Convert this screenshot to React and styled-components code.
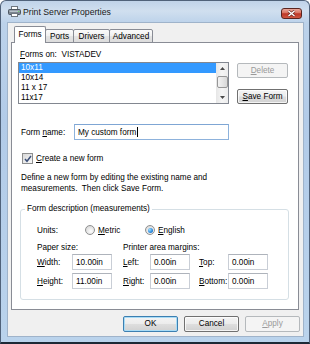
import React from "react";
import styled, { createGlobalStyle } from "styled-components";

const GlobalStyle = createGlobalStyle`
  html, body {
    margin: 0;
    padding: 0;
    background: #fff;
  }
  body {
    width: 310px;
    height: 344px;
    overflow: hidden;
    font-family: "Liberation Sans", Arial, sans-serif;
    font-size: 8.2px;
    color: #000;
  }
  * {
    box-sizing: border-box;
  }
`;

const forms = ["10x11", "10x14", "11 x 17", "11x17"];

const Window = styled.div`
  width: 310px;
  height: 344px;
  display: flex;
  flex-direction: column;
  border: 1px solid #50627a;
  border-bottom: 2px solid #1d2936;
  border-radius: 6px 6px 0 0;
  background: linear-gradient(
    180deg,
    #c0d3e9 0px,
    #d0dfef 10px,
    #bcd2ea 22px,
    #b2cbe8 120px,
    #bad3ec 100%
  );
  padding: 0 5px 5px 6px;
`;

const TitleBar = styled.div`
  height: 21px;
  display: flex;
  align-items: center;
  padding-left: 1px;
`;

const TitleText = styled.span`
  margin-left: 2px;
  font-size: 8.7px;
  color: #1a1a1a;
  flex: 1;
`;

const CloseButton = styled.span`
  width: 21px;
  height: 11px;
  margin: 3px 2px 0 0;
  display: flex;
  align-items: center;
  justify-content: center;
  border: 1px solid #5a2520;
  border-radius: 3px;
  background: linear-gradient(
    180deg,
    #eaa89c 0%,
    #d9725f 45%,
    #bd3626 52%,
    #cf5741 100%
  );
`;

const Client = styled.div`
  flex: 1;
  display: flex;
  flex-direction: column;
  background: #f0f0f0;
  border: 1px solid #9fb3ca;
  padding: 3px 4px 0 3px;
`;

const TabStrip = styled.div`
  height: 17px;
  display: flex;
  align-items: flex-end;
  padding-left: 3px;
  margin-bottom: -1px;
  position: relative;
  z-index: 1;
`;

const Tab = styled.div`
  width: ${(p) => p.$w}px;
  height: ${(p) => (p.$active ? 17 : 14)}px;
  margin-left: ${(p) => (p.$first ? 0 : -1)}px;
  display: flex;
  align-items: center;
  justify-content: center;
  border: 1px solid #898c95;
  border-bottom: ${(p) => (p.$active ? "none" : "1px solid #898c95")};
  border-radius: 2px 2px 0 0;
  background: ${(p) =>
    p.$active
      ? "#fff"
      : "linear-gradient(180deg, #fbfbfb 0%, #f0f0f0 50%, #e4e4e4 51%, #dcdcdc 100%)"};
  position: relative;
  z-index: ${(p) => (p.$active ? 2 : 1)};
  padding-bottom: ${(p) => (p.$active ? 2 : 0)}px;
`;

const Panel = styled.div`
  height: 268px;
  display: flex;
  flex-direction: column;
  border: 1px solid #898c95;
  background: #fff;
`;

const Label = styled.span`
  white-space: nowrap;
  line-height: 10px;
`;

const U = styled.span`
  text-decoration: underline;
`;

const FormsOn = styled.div`
  margin: 7px 0 0 8px;
  line-height: 10px;
  height: 10px;
`;

const ListRow = styled.div`
  display: flex;
  align-items: flex-start;
  margin: 2px 0 0 6px;
`;

const ListBox = styled.div`
  width: 211px;
  height: 42px;
  display: flex;
  border: 1px solid #828790;
  background: #fff;
`;

const ListItems = styled.div`
  flex: 1;
  display: flex;
  flex-direction: column;
`;

const ListItem = styled.div`
  height: 10px;
  line-height: 10px;
  padding-left: 2px;
  background: ${(p) => (p.$selected ? "#3399ff" : "transparent")};
  color: ${(p) => (p.$selected ? "#fff" : "#000")};
`;

const ScrollBar = styled.div`
  width: 12px;
  display: flex;
  flex-direction: column;
  align-items: center;
  background: linear-gradient(90deg, #e6e6e6, #f5f5f5 50%, #ececec);
`;

const ScrollArrow = styled.div`
  height: 11px;
  width: 100%;
  display: flex;
  align-items: center;
  justify-content: center;
`;

const ScrollThumb = styled.div`
  width: 11px;
  height: 12px;
  margin: 2px 0 1px;
  border: 1px solid #979797;
  border-radius: 2px;
  background: linear-gradient(90deg, #f3f3f3, #e6e6e6 50%, #d8d8d8);
`;

const Spacer = styled.div`
  flex: 1;
`;

const SideButtons = styled.div`
  display: flex;
  flex-direction: column;
  gap: 11px;
  margin: 1px 0 0 8px;
`;

const Button = styled.button`
  width: ${(p) => p.$w || 55}px;
  height: ${(p) => p.$h || 16}px;
  padding: 0;
  font: inherit;
  line-height: 10px;
  color: ${(p) => (p.disabled ? "#9a9a9a" : "#000")};
  border: 1px solid
    ${(p) => (p.$primary ? "#3c7fb1" : p.disabled ? "#b5b9bc" : "#707070")};
  border-radius: 2px;
  background: ${(p) =>
    p.disabled
      ? "#f4f4f4"
      : "linear-gradient(180deg, #f4f4f4 0%, #ececec 48%, #dedede 52%, #d1d1d1 100%)"};
  box-shadow: ${(p) =>
    p.$primary
      ? "inset 0 0 0 1px #a9dcf6"
      : p.disabled
      ? "none"
      : "inset 0 0 0 1px rgba(255, 255, 255, 0.75)"};
`;

const Row = styled.div`
  display: flex;
  align-items: center;
  margin: ${(p) => p.$mt || 0}px 0 0 ${(p) => p.$ml || 0}px;
  height: ${(p) => p.$h}px;
`;

const FieldLabel = styled.span`
  width: ${(p) => p.$w}px;
  white-space: nowrap;
`;

const TextBox = styled.div`
  width: ${(p) => p.$w}px;
  height: ${(p) => p.$h || 16}px;
  display: flex;
  align-items: center;
  padding-left: 3px;
  background: #fff;
  border: 1px solid ${(p) => (p.$focused ? "#8db2dc" : "#c9ced6")};
  border-top-color: ${(p) => (p.$focused ? "#7fa6d4" : "#aeb3bb")};
  white-space: nowrap;
`;

const Caret = styled.span`
  display: inline-block;
  width: 1px;
  height: 10px;
  background: #000;
  margin-left: 1px;
`;

const CheckBox = styled.span`
  width: 11px;
  height: 11px;
  display: flex;
  align-items: center;
  justify-content: center;
  border: 1px solid #8e8f8f;
  background: linear-gradient(135deg, #d9d9d9, #f8f8f8);
  margin-right: 3px;
`;

const Description = styled.div`
  margin: 8px 0 0 9px;
  line-height: 11px;
`;

const GroupBox = styled.fieldset`
  width: 269px;
  margin: 10px 0 0 8px;
  padding: 0 0 10px 0;
  border: 1px solid #d5dfe5;
  border-radius: 3px;
  min-inline-size: 0;
`;

const Legend = styled.legend`
  margin-left: 4px;
  padding: 0 2px;
  line-height: 10px;
  height: 10px;
`;

const GroupBody = styled.div`
  padding-left: 16px;
`;

const Radio = styled.span`
  width: 10px;
  height: 10px;
  margin-right: 3px;
  border-radius: 50%;
  border: 1px solid #8f9090;
  background: radial-gradient(circle at 60% 65%, #fdfdfd 0%, #e2e2e2 60%, #cfcfcf 100%);
  display: flex;
  align-items: center;
  justify-content: center;
  &::after {
    content: "";
    display: ${(p) => (p.$checked ? "block" : "none")};
    width: 5px;
    height: 5px;
    border-radius: 50%;
    background: radial-gradient(circle at 35% 35%, #9fe0ff 0%, #2f8ee0 55%, #1b5fae 100%);
  }
`;

const RadioOption = styled.span`
  width: ${(p) => p.$w}px;
  display: flex;
  align-items: center;
`;

const MeasureGrid = styled.div`
  display: grid;
  grid-template-columns: 35px 51px 27px 49px 29px 40px;
  align-items: center;
  height: ${(p) => p.$h}px;
  margin-top: ${(p) => p.$mt}px;
`;

const Span2 = styled.span`
  grid-column: span ${(p) => p.$n};
  white-space: nowrap;
`;

const DialogButtons = styled.div`
  display: flex;
  justify-content: flex-end;
  gap: 6px;
  margin: 6px -1px 0 0;
`;

const PrinterIcon = () => (
  <svg width="13" height="11" viewBox="0 0 13 11">
    <rect x="3.5" y="0.5" width="6" height="3" fill="#fff" stroke="#6f7780" />
    <rect x="0.5" y="3.5" width="12" height="5" rx="1" fill="#7d8791" stroke="#4d5660" />
    <rect x="1.5" y="4.5" width="10" height="1.5" fill="#b8c1ca" />
    <rect x="3.5" y="7.5" width="6" height="3" fill="#fff" stroke="#6f7780" />
    <rect x="10" y="5" width="1.2" height="1" fill="#6fd36f" />
  </svg>
);

const CloseGlyph = () => (
  <svg width="9" height="7" viewBox="0 0 9 7">
    <path d="M1.5 1 L7.5 6 M7.5 1 L1.5 6" stroke="#6b2a22" strokeWidth="2.8" />
    <path d="M1.5 1 L7.5 6 M7.5 1 L1.5 6" stroke="#fff" strokeWidth="1.5" />
  </svg>
);

const Arrow = ({ up }) => (
  <svg width="5" height="3" viewBox="0 0 5 3">
    <path d={up ? "M0 3 L2.5 0 L5 3 Z" : "M0 0 L2.5 3 L5 0 Z"} fill="#4a4a4a" />
  </svg>
);

const CheckMark = () => (
  <svg width="8" height="8" viewBox="0 0 8 8">
    <path d="M1 4 L3 6.3 L7 1" fill="none" stroke="#3b4f78" strokeWidth="1.5" />
  </svg>
);

const App = () => {
  return (
    <>
      <GlobalStyle />
      <Window>
        <TitleBar>
          <PrinterIcon />
          <TitleText>Print Server Properties</TitleText>
          <CloseButton>
            <CloseGlyph />
          </CloseButton>
        </TitleBar>

        <Client>
          <TabStrip>
            <Tab $w={32} $active $first>Forms</Tab>
            <Tab $w={29}>Ports</Tab>
            <Tab $w={37}>Drivers</Tab>
            <Tab $w={44}>Advanced</Tab>
          </TabStrip>

          <Panel>
            <FormsOn>
              <U>F</U>orms on:&nbsp;&nbsp;VISTADEV
            </FormsOn>

            <ListRow>
              <ListBox>
                <ListItems>
                  {forms.map((f, i) => (
                    <ListItem key={f} $selected={i === 0}>
                      {f}
                    </ListItem>
                  ))}
                </ListItems>
                <ScrollBar>
                  <ScrollArrow>
                    <Arrow up />
                  </ScrollArrow>
                  <ScrollThumb />
                  <Spacer />
                  <ScrollArrow>
                    <Arrow />
                  </ScrollArrow>
                </ScrollBar>
              </ListBox>
              <SideButtons>
                <Button $w={51} $h={15} disabled>
                  <U>D</U>elete
                </Button>
                <Button $w={51} $h={15}>
                  <U>S</U>ave Form
                </Button>
              </SideButtons>
            </ListRow>

            <Row $mt={20} $ml={9} $h={16}>
              <FieldLabel $w={53}>
                Form <U>n</U>ame:
              </FieldLabel>
              <TextBox $w={155} $focused>
                My custom form
                <Caret />
              </TextBox>
            </Row>

            <Row $mt={13} $ml={10} $h={11}>
              <CheckBox>
                <CheckMark />
              </CheckBox>
              <Label>
                <U>C</U>reate a new form
              </Label>
            </Row>

            <Description>
              Define a new form by editing the existing name and
              <br />
              measurements.&nbsp; Then click Save Form.
            </Description>

            <GroupBox>
              <Legend>Form description (measurements)</Legend>
              <GroupBody>
                <Row $mt={9} $h={14}>
                  <FieldLabel $w={48}>Units:</FieldLabel>
                  <RadioOption $w={60}>
                    <Radio />
                    <U>M</U>etric
                  </RadioOption>
                  <RadioOption $w={60}>
                    <Radio $checked />
                    <U>E</U>nglish
                  </RadioOption>
                </Row>

                <MeasureGrid $h={12} $mt={4}>
                  <Span2 $n={2}>Paper size:</Span2>
                  <Span2 $n={4}>Printer area margins:</Span2>
                </MeasureGrid>

                <MeasureGrid $h={16} $mt={1}>
                  <span>
                    <U>W</U>idth:
                  </span>
                  <TextBox $w={40}>10.00in</TextBox>
                  <span>
                    <U>L</U>eft:
                  </span>
                  <TextBox $w={40}>0.00in</TextBox>
                  <span>
                    <U>T</U>op:
                  </span>
                  <TextBox $w={40}>0.00in</TextBox>
                </MeasureGrid>

                <MeasureGrid $h={16} $mt={3}>
                  <span>
                    <U>H</U>eight:
                  </span>
                  <TextBox $w={40}>11.00in</TextBox>
                  <span>
                    <U>R</U>ight:
                  </span>
                  <TextBox $w={40}>0.00in</TextBox>
                  <span>
                    <U>B</U>ottom:
                  </span>
                  <TextBox $w={40}>0.00in</TextBox>
                </MeasureGrid>
              </GroupBody>
            </GroupBox>
          </Panel>

          <DialogButtons>
            <Button $primary>OK</Button>
            <Button>Cancel</Button>
            <Button disabled>
              <U>A</U>pply
            </Button>
          </DialogButtons>
        </Client>
      </Window>
    </>
  );
};

export default App;
